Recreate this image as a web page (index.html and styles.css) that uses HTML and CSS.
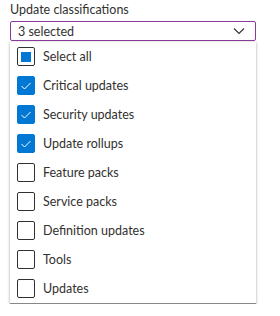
FILE: index.html
```html
<!DOCTYPE html>
<html>
<head>
    <meta charset="UTF-8">
    <title>Update classifications</title>
    <link rel="stylesheet" href="styles.css">
</head>
<body>
    <div class="field">
        <label class="field-label">Update classifications</label>
        <div class="dropdown">
            <span>3 selected</span>
            <svg class="chevron" width="12" height="8" viewBox="0 0 12 8"><path d="M1 1.5 L6 6.5 L11 1.5" fill="none" stroke="#323130" stroke-width="1.1"/></svg>
        </div>
        <div class="menu">
            <div class="option"><span class="box partial"></span>Select all</div>
            <div class="option"><span class="box checked"><svg width="12" height="10" viewBox="0 0 12 10"><path d="M1.5 5 L4.5 8 L10.5 2" fill="none" stroke="#fff" stroke-width="1"/></svg></span>Critical updates</div>
            <div class="option"><span class="box checked"><svg width="12" height="10" viewBox="0 0 12 10"><path d="M1.5 5 L4.5 8 L10.5 2" fill="none" stroke="#fff" stroke-width="1"/></svg></span>Security updates</div>
            <div class="option"><span class="box checked"><svg width="12" height="10" viewBox="0 0 12 10"><path d="M1.5 5 L4.5 8 L10.5 2" fill="none" stroke="#fff" stroke-width="1"/></svg></span>Update rollups</div>
            <div class="option"><span class="box"></span>Feature packs</div>
            <div class="option"><span class="box"></span>Service packs</div>
            <div class="option"><span class="box"></span>Definition updates</div>
            <div class="option"><span class="box"></span>Tools</div>
            <div class="option"><span class="box"></span>Updates</div>
        </div>
    </div>
</body>
</html>
```

FILE: styles.css
```css
body {
  margin: 0;
  background: #fff;
  font-family: "Lato", "Open Sans", sans-serif;
  font-size: 12.5px;
  color: #323130;
}

.field {
  width: 246px;
  margin-left: 10px;
}

.field-label {
  display: block;
  height: 21px;
  line-height: 19px;
}

.dropdown {
  display: flex;
  align-items: center;
  justify-content: space-between;
  box-sizing: border-box;
  height: 20px;
  padding: 0 8px 0 7px;
  border: 1px solid #8a3b9a;
  border-radius: 2px;
}

.chevron {
  margin-right: 2px;
}

.menu {
  margin-top: 1px;
  background: #fff;
  box-shadow: 0 1px 3px rgba(0, 0, 0, 0.3), 0 0 1px rgba(0, 0, 0, 0.15);
  border-bottom: 1px solid #8a8886;
}

.option {
  display: flex;
  align-items: center;
  height: 29px;
  padding-left: 7px;
}

.box {
  display: flex;
  align-items: center;
  justify-content: center;
  box-sizing: border-box;
  width: 18px;
  height: 19px;
  margin-right: 8px;
  border: 1px solid #323130;
  border-radius: 2px;
}

.box.checked {
  background: #0078d4;
  border-color: #0078d4;
}

.box.partial::after {
  content: "";
  width: 10px;
  height: 10px;
  background: #0078d4;
}
```
